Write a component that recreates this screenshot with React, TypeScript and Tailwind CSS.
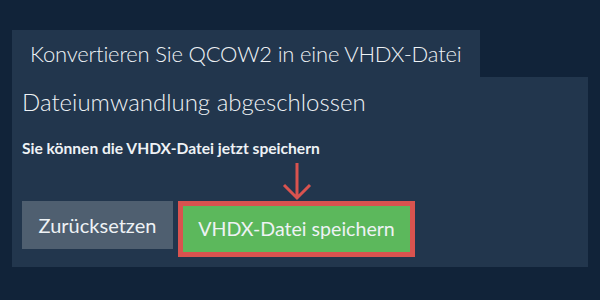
export default function App() {
  return (
    <div
      className="min-h-[300px] w-[600px] bg-[#112339] px-[12px] pt-[30px] text-[#eef2f5]"
      style={{ fontFamily: "Lato, 'Open Sans', sans-serif" }}
    >
      <div className="inline-flex h-[47px] w-[468px] items-center bg-[#22364d] px-[18px] text-[22px] font-light leading-none tracking-[-0.2px]">
        Konvertieren Sie QCOW2 in eine VHDX-Datei
      </div>

      <div className="bg-[#22364d] px-[10px] pt-[11px] pb-[10px]">
        <h2 className="text-[24px] font-light leading-[1.2]">Dateiumwandlung abgeschlossen</h2>
        <p className="mt-[22px] text-[15.6px] font-bold leading-[1.2]">
          Sie können die VHDX-Datei jetzt speichern
        </p>

        <svg className="ml-[260px] mt-[3px] block" width="30" height="40" viewBox="0 0 30 40">
          <path
            d="M15 2 V37 M2 24 L15 37 L28 24"
            fill="none"
            stroke="#d9534f"
            strokeWidth="3"
          />
        </svg>

        <div className="flex items-start gap-[5px]">
          <button className="flex h-[48px] w-[151px] items-center justify-center bg-[#4f5f70] text-[20px] leading-none">
            Zurücksetzen
          </button>
          <button className="flex h-[56px] w-[237px] items-center justify-center border-[5px] border-[#d9534f] bg-[#5cb85c] text-[19.6px] leading-none">
            VHDX-Datei speichern
          </button>
        </div>
      </div>
    </div>
  );
}
